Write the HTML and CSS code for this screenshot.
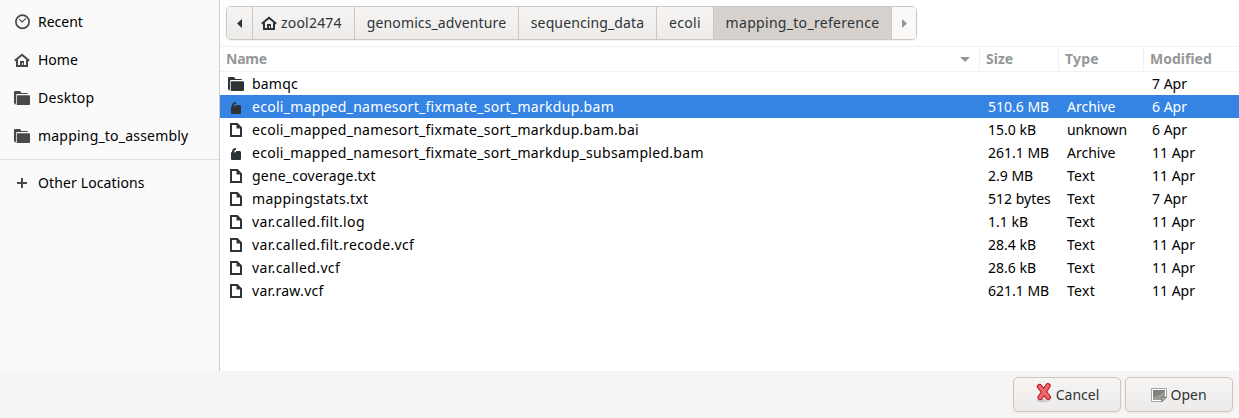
FILE: index.html
```html
<!DOCTYPE html>
<html lang="en">
<head>
<meta charset="utf-8">
<title>Open File</title>
<link rel="stylesheet" href="styles.css">
</head>
<body>
<svg width="0" height="0" class="defs">
  <symbol id="home" viewBox="0 0 16 16"><path d="M.8 8.8 8 2.8l7.2 6" fill="none" stroke="currentColor" stroke-width="2"/><path d="M3 7.5V14h10V7.5" fill="none" stroke="currentColor" stroke-width="2"/><path d="M6 9h4v5H9v-3H8v3H6z" fill="currentColor"/></symbol>
  <symbol id="folder" viewBox="0 0 16 16"><path d="M0 2q0-1 1-1h5l1.5 2H13q1 0 1 1H2v9.8H1q-1 0-1-1z" fill="currentColor"/><path d="M3 5.2h12q1 0 1 1V14q0 1-1 1H3z" fill="currentColor"/><path d="M2 4h1v11H1q-1 0-1-1v-2h2z" fill="currentColor" opacity=".25"/></symbol>
  <symbol id="file" viewBox="0 0 16 16"><path d="M3 2h6.2L13 5.8V14H3z" fill="none" stroke="currentColor" stroke-width="2"/><path d="M8.5 2v4.5H13z" fill="currentColor"/></symbol>
  <symbol id="package" viewBox="0 0 16 16"><path d="M3 8q0-1 1-1 0-3.8 4-4v1.6Q6 5 6.2 7.6H7L8.5 6H12l1 1v7q0 1-1 1H4q-1 0-1-1z" fill="currentColor"/></symbol>
</svg>
<div class="chooser">
  <div class="content">
    <nav class="sidebar">
      <div class="place"><svg class="icon" viewBox="0 0 16 16"><circle cx="8.5" cy="7.7" r="6.6" fill="none" stroke="currentColor" stroke-width="1.7"/><path d="M5.2 5.2 8 8l4-3.6" fill="none" stroke="currentColor" stroke-width="1.1"/></svg><span>Recent</span></div>
      <div class="place"><svg class="icon"><use href="#home"/></svg><span>Home</span></div>
      <div class="place ls-wide"><svg class="icon"><use href="#folder"/></svg><span>Desktop</span></div>
      <div class="place ls-mid"><svg class="icon"><use href="#folder"/></svg><span>mapping_to_assembly</span></div>
      <div class="separator"></div>
      <div class="place ls-slight"><svg class="icon" viewBox="0 0 16 16"><path d="M8 3v10M3 8h10" stroke="currentColor" stroke-width="2"/></svg><span>Other Locations</span></div>
    </nav>
    <main class="browser">
      <div class="pathbar">
        <div class="crumb c-back"><svg class="arrow" viewBox="0 0 5 9"><path d="M5 0v9L0 4.5z" fill="currentColor"/></svg></div>
        <div class="crumb c-home ls-mid"><svg class="icon"><use href="#home"/></svg><span>zool2474</span></div>
        <div class="crumb c-genomics ls-slight"><span>genomics_adventure</span></div>
        <div class="crumb c-seq ls-slight"><span>sequencing_data</span></div>
        <div class="crumb c-ecoli ls-wide"><span>ecoli</span></div>
        <div class="crumb c-active ls-wide"><span>mapping_to_reference</span></div>
        <div class="crumb c-next"><svg class="arrow" viewBox="0 0 5 9"><path d="M0 0v9l5-4.5z" fill="currentColor"/></svg></div>
      </div>
      <div class="grid header"><div class="h-name"><span>Name</span><svg class="sort" viewBox="0 0 10 5"><path d="M0 0h10L5 5z" fill="currentColor"/></svg></div><div>Size</div><div class="ls-mid">Type</div><div>Modified</div></div>
      <div class="grid row"><div class="ls-mid"><svg class="icon"><use href="#folder"/></svg><span>bamqc</span></div><div></div><div></div><div>7 Apr</div></div>
      <div class="grid row selected"><div><svg class="icon"><use href="#package"/></svg><span>ecoli_mapped_namesort_fixmate_sort_markdup.bam</span></div><div>510.6 MB</div><div>Archive</div><div>6 Apr</div></div>
      <div class="grid row"><div><svg class="icon"><use href="#file"/></svg><span>ecoli_mapped_namesort_fixmate_sort_markdup.bam.bai</span></div><div>15.0 kB</div><div class="ls-tight">unknown</div><div>6 Apr</div></div>
      <div class="grid row"><div><svg class="icon"><use href="#package"/></svg><span>ecoli_mapped_namesort_fixmate_sort_markdup_subsampled.bam</span></div><div>261.1 MB</div><div>Archive</div><div>11 Apr</div></div>
      <div class="grid row"><div class="ls-mid"><svg class="icon"><use href="#file"/></svg><span>gene_coverage.txt</span></div><div>2.9 MB</div><div class="ls-wide">Text</div><div>11 Apr</div></div>
      <div class="grid row"><div><svg class="icon"><use href="#file"/></svg><span>mappingstats.txt</span></div><div>512 bytes</div><div class="ls-wide">Text</div><div>7 Apr</div></div>
      <div class="grid row"><div class="ls-wider"><svg class="icon"><use href="#file"/></svg><span>var.called.filt.log</span></div><div>1.1 kB</div><div class="ls-wide">Text</div><div>11 Apr</div></div>
      <div class="grid row"><div class="ls-wider"><svg class="icon"><use href="#file"/></svg><span>var.called.filt.recode.vcf</span></div><div>28.4 kB</div><div class="ls-wide">Text</div><div>11 Apr</div></div>
      <div class="grid row"><div class="ls-wider"><svg class="icon"><use href="#file"/></svg><span>var.called.vcf</span></div><div>28.6 kB</div><div class="ls-wide">Text</div><div>11 Apr</div></div>
      <div class="grid row"><div><svg class="icon"><use href="#file"/></svg><span>var.raw.vcf</span></div><div>621.1 MB</div><div class="ls-wide">Text</div><div>11 Apr</div></div>
    </main>
  </div>
  <footer class="actions">
    <button class="button b-cancel"><svg class="cancel-icon" viewBox="0 0 18 20"><ellipse cx="8.5" cy="17.5" rx="7" ry="1.8" fill="#000" opacity=".13"/><path d="M4.6 3.6 13.3 14.2M13 2.8 5.2 14.5" stroke="#b50f1b" stroke-width="5.4" stroke-linecap="round"/><path d="M4.6 3.6 13.3 14.2M13 2.8 5.2 14.5" stroke="#f0696c" stroke-width="3.4" stroke-linecap="round"/></svg><span>Cancel</span></button>
    <button class="button b-open"><svg class="open-icon" viewBox="0 0 16 14"><path d="M.5.5h15v9l-4 4H.5z" fill="#fff" stroke="#a5a5a3"/><path d="M2 2h12v7l-3 3H2z" fill="#7f817e"/><path d="M2 9q6-1 12-6v6l-3 3H2z" fill="#989a96"/><path d="M10.5 13.5q1-2 .5-4.5 2 1 4.5.2z" fill="#d6d6d4" stroke="#666" stroke-width=".8"/></svg><span>Open</span></button>
  </footer>
</div>
</body>
</html>
```
FILE: styles.css
```css
* { box-sizing: border-box; }
body { margin: 0; font: 14px/20px "Noto Sans", "Open Sans", sans-serif; color: #000; background: #fff; }
.defs { display: block; }
.chooser { height: 418px; display: flex; flex-direction: column; overflow: hidden; }
.content { flex: 1; display: flex; min-height: 0; }
.icon { width: 16px; height: 16px; flex: none; }
span, .grid > div { white-space: nowrap; }

.sidebar { width: 220px; padding-top: 3px; background: #fafafa; border-right: 1px solid #cfcbc7; }
.place { height: 38px; padding-left: 14px; display: flex; align-items: center; gap: 8px; }
.place .icon { color: #494949; }
.separator { height: 1px; margin: 4px 0; background: #dedede; }

.browser { flex: 1; min-width: 0; }
.pathbar { display: flex; width: 691px; height: 34px; margin: 6px 0 6px 6px; border: 1px solid #cdc7c2; border-radius: 5px; overflow: hidden; color: #2e3436; box-shadow: 0 1px 2px rgba(0,0,0,.07); }
.crumb { display: flex; align-items: center; justify-content: center; gap: 4px; border-right: 1px solid #cdc7c2; background: linear-gradient(#f6f5f4, #edebe9); }
.crumb:last-child { border-right: 0; }
.c-back { width: 26px; }
.c-home { width: 102px; justify-content: flex-start; padding-left: 8px; }
.c-genomics { width: 164px; }
.c-seq { width: 138px; }
.c-ecoli { width: 57px; }
.c-active { width: 178px; background: #d6d1cd; }
.c-next { flex: 1; background: #faf9f8; color: #929595; }
.arrow { width: 5px; height: 9px; }

.grid { display: grid; grid-template-columns: 760px 79px 85px 1fr; }
.header { height: 26px; border: solid #f1f1f1; border-width: 1px 0; color: #959797; font-weight: 700; }
.header > div { padding-left: 6px; line-height: 24px; border-right: 1px solid #f1f1f1; }
.header > div:last-child { border-right: 0; }
.header .h-name { display: flex; align-items: center; justify-content: space-between; padding-right: 9px; letter-spacing: -.2px; }
.sort { width: 10px; height: 5px; }
.row { height: 23px; line-height: 23px; }
.row > div { padding-left: 8px; }
.row > div:first-child { display: flex; align-items: center; gap: 8px; letter-spacing: .29px; }
.row .icon { color: #2e3436; }
.selected { background: #3584e4; color: #fff; }

.ls-tight { letter-spacing: -.2px; }
.ls-slight { letter-spacing: .12px; }
.ls-mid, .row > .ls-mid:first-child { letter-spacing: .2px; }
.ls-wide { letter-spacing: .3px; }
.row > .ls-wider:first-child { letter-spacing: .37px; }

.actions { height: 47px; padding: 6px 6px 0; display: flex; justify-content: flex-end; gap: 4px; background: #f6f5f4; }
.button { width: 108px; height: 35px; padding: 0; display: flex; align-items: center; justify-content: center; gap: 3px; font: inherit; color: #2e3436; border: 1px solid #cdc7c2; border-radius: 5px; background: linear-gradient(#f6f5f4, #edebe9); box-shadow: 0 1px 2px rgba(0,0,0,.07); }
.cancel-icon { width: 18px; height: 20px; fill: none; margin-top: -3px; }
.open-icon { width: 16px; height: 14px; }
```
